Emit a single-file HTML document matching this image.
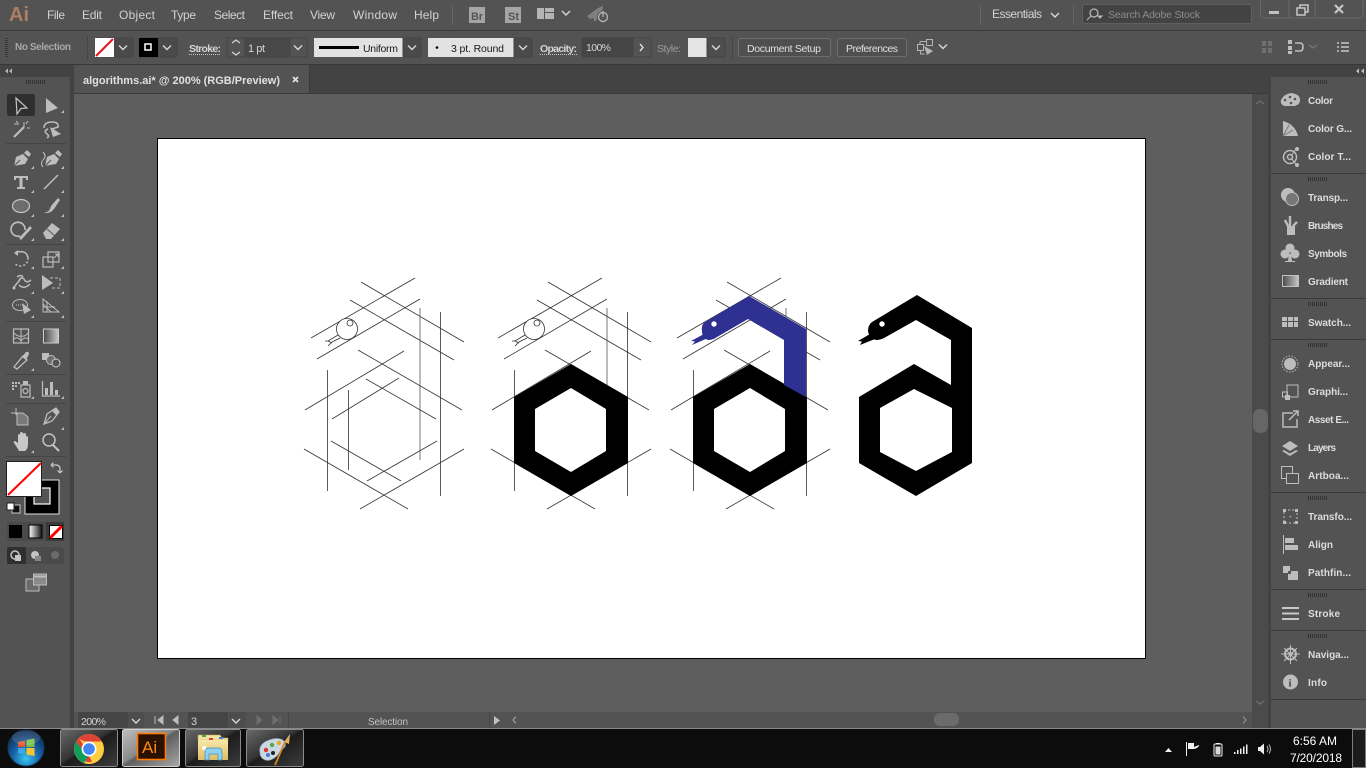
<!DOCTYPE html>
<html><head><meta charset="utf-8"><title>Illustrator</title>
<style>
html,body{margin:0;padding:0;background:#535353;width:1366px;height:768px;overflow:hidden}
svg{position:absolute;left:0;top:0;display:block}
text{font-family:"Liberation Sans",sans-serif;fill:#d4d4d4;font-size:11px}
.m text{font-size:12px;fill:#d2d2d2}
.p text{font-size:10px;font-weight:bold;fill:#dcdcdc}
.i{fill:#bdbdbd;stroke:none}
.o{fill:none;stroke:#bdbdbd;stroke-width:1.5}
.c{fill:none;stroke:#d8d8d8;stroke-width:1.4}
.g line{stroke:#333;stroke-width:.8}
</style></head><body>
<svg width="1366" height="768" viewBox="0 0 1366 768" xmlns="http://www.w3.org/2000/svg">
<defs>
<path id="ch" d="M-4,-2 L0,2 L4,-2" fill="none" stroke="#d8d8d8" stroke-width="1.4"/>
<path id="tr" d="M3,0 V3 H0 Z" fill="#bdbdbd"/>
<path id="grip" d="M.5,0 v4 M2.500,0 v4 M4.500,0 v4 M6.500,0 v4 M8.500,0 v4 M10.500,0 v4 M12.500,0 v4 M14.500,0 v4 M16.500,0 v4 M18.500,0 v4" stroke="#333" stroke-width="1" fill="none"/>
<linearGradient id="gr" x1="0" x2="1" y1="0" y2="0"><stop offset="0" stop-color="#4a4a4a"/><stop offset="1" stop-color="#c8c8c8"/></linearGradient>
<linearGradient id="gw" x1="0" x2="1" y1="0" y2="0"><stop offset="0" stop-color="#fff"/><stop offset="1" stop-color="#111"/></linearGradient>
<linearGradient id="tb" x1="0" x2="1" y1="0" y2="1"><stop offset="0" stop-color="#6a6a6a"/><stop offset=".45" stop-color="#333"/><stop offset=".5" stop-color="#1c1c1c"/><stop offset="1" stop-color="#3c3c3c"/></linearGradient>
<linearGradient id="tba" x1="0" x2="1" y1="0" y2="1"><stop offset="0" stop-color="#bdbdbd"/><stop offset=".45" stop-color="#8a8a8a"/><stop offset=".5" stop-color="#5f5f5f"/><stop offset="1" stop-color="#a8a8a8"/></linearGradient>
<radialGradient id="orb" cx=".5" cy=".8" r=".75"><stop offset="0" stop-color="#37c6f2"/><stop offset=".5" stop-color="#1a62a8"/><stop offset="1" stop-color="#0b2a52"/></radialGradient>
<linearGradient id="fold" x1="0" x2="0" y1="0" y2="1"><stop offset="0" stop-color="#f7e8a8"/><stop offset="1" stop-color="#e0bd62"/></linearGradient>
<g id="guides" class="g">
<line x1="311" y1="338" x2="415" y2="278"/><line x1="317" y1="359" x2="420" y2="299"/>
<line x1="361" y1="282" x2="464" y2="342"/><line x1="350" y1="300" x2="454" y2="360"/>
<line x1="420" y1="308" x2="420" y2="460" style="stroke:#555"/><line x1="440.5" y1="312" x2="440.5" y2="496"/>
<line x1="358" y1="350" x2="462" y2="410"/><line x1="404" y1="351" x2="305" y2="410"/>
<line x1="366" y1="379" x2="436" y2="419"/><line x1="399" y1="378" x2="332" y2="419"/>
<line x1="327.5" y1="370" x2="327.5" y2="491"/><line x1="348.5" y1="390" x2="348.5" y2="470"/>
<line x1="331" y1="441" x2="401" y2="481"/><line x1="437" y1="441" x2="367" y2="481"/>
<line x1="304" y1="449" x2="408" y2="509"/><line x1="464" y1="449" x2="360" y2="509"/>
</g>
<g id="head" fill="#fff" stroke="#333" stroke-width=".8">
<circle cx="347" cy="329" r="10.5"/><circle cx="350" cy="323" r="3"/>
<path d="M338,335 L328,341 L325,341 M340,338 L332,342 L328,346 M328,341 L332,343" fill="none"/>
</g>
<g id="hex">
<path d="M571,364 L628,397 V463 L571,496 L514,463 V397 Z" fill="#000"/>
<path d="M571,388 L606,409 V451 L571,472 L535,451 V409 Z" fill="#fff"/>
</g>
</defs>

<!-- base -->
<rect width="1366" height="768" fill="#535353"/>
<rect x="0" y="30" width="1366" height="1" fill="#3a3a3a"/>
<rect x="0" y="64" width="1366" height="1" fill="#383838"/>
<rect x="74" y="65" width="1194" height="29" fill="#434343"/>
<rect x="74" y="93" width="1194" height="1" fill="#3a3a3a"/>
<rect x="74" y="94" width="1178" height="618" fill="#5e5e5e"/>
<rect x="1252" y="94" width="16" height="618" fill="#4b4b4b"/>
<rect x="70" y="65" width="4" height="663" fill="#424242"/>
<rect x="1268" y="65" width="3" height="663" fill="#424242"/>
<rect x="0" y="65" width="72" height="12" fill="#434343"/>
<rect x="1271" y="65" width="95" height="12" fill="#434343"/>

<!-- menu -->
<text x="9" y="21" style="font-size:20px;font-weight:bold;fill:#ae7f60">Ai</text>
<g class="m">
<text x="47" y="19" textLength="18">File</text><text x="82" y="19" textLength="20">Edit</text>
<text x="119" y="19" textLength="36">Object</text><text x="171" y="19" textLength="25">Type</text>
<text x="214" y="19" textLength="31">Select</text><text x="263" y="19" textLength="30">Effect</text>
<text x="310" y="19" textLength="25">View</text><text x="353" y="19" textLength="44">Window</text>
<text x="414" y="19" textLength="25">Help</text>
</g>
<rect x="452" y="5" width="1" height="20" fill="#666"/>
<rect x="469" y="7" width="16" height="16" fill="#a5a5a5"/><text x="471" y="20" textLength="12" style="font-weight:bold;fill:#555">Br</text>
<rect x="505" y="7" width="16" height="16" fill="#a5a5a5"/><text x="508" y="20" textLength="11" style="font-weight:bold;fill:#555">St</text>
<path d="M537,8 h7 v11 h-7 Z M545,8 h9 v4 h-9 Z M545,13 h9 v6 h-9 Z" fill="#b5b5b5"/>
<use href="#ch" x="566" y="13"/>
<path d="M587,16 L594,11 Q599,7 603,6 Q603,10 600,14 L595,22 L593,18 L590,19 Z" fill="#7f7f7f"/>
<circle cx="603" cy="17" r="6" fill="#535353"/>
<circle cx="603" cy="17" r="4.5" fill="none" stroke="#b0b0b0" stroke-width="1.4"/><path d="M603,11 v6" stroke="#b0b0b0" stroke-width="1.4"/>
<rect x="980" y="5" width="1" height="20" fill="#666"/><rect x="1073" y="5" width="1" height="20" fill="#666"/>
<text x="992" y="18" textLength="50" style="font-size:12px;fill:#d2d2d2">Essentials</text>
<use href="#ch" x="1055" y="15"/>
<rect x="1082.500" y="4.500" width="169" height="19" rx="2" fill="#434343" stroke="#5f5f5f"/>
<circle cx="1094" cy="13" r="4" fill="none" stroke="#bbb" stroke-width="1.2"/><path d="M1091,16 L1087,20 M1098,16 h4 l-2,2 Z" stroke="#bbb" fill="#bbb"/>
<text x="1108" y="18" textLength="92" style="font-size:10.500px;fill:#8d8d8d">Search Adobe Stock</text>
<path d="M1260.500,0 V15 Q1260.500,18 1264,18 H1360 Q1363,18 1363,15 V0 M1289,0 V18 M1315,0 V18" fill="none" stroke="#686868"/>
<rect x="1269" y="11" width="10" height="3" fill="#c0c0c0"/>
<path d="M1297,8 h8 v7 h-8 Z M1300,8 V5 h8 v7 h-3" fill="none" stroke="#c8c8c8" stroke-width="1.5"/>
<path d="M1335,5 L1343,13 M1343,5 L1335,13" stroke="#c8c8c8" stroke-width="2.200"/>

<!-- control bar -->
<path d="M5,38.500 h3 M5,40.500 h3 M5,42.500 h3 M5,44.500 h3 M5,46.500 h3 M5,48.500 h3 M5,50.500 h3 M5,52.500 h3 M5,54.500 h3 M5,56.500 h3" stroke="#3a3a3a"/>
<text x="15" y="50" textLength="56" style="font-size:10px;font-weight:bold;fill:#a8a8a8">No Selection</text>
<rect x="87" y="36" width="1" height="24" fill="#444"/>
<rect x="95" y="38" width="38" height="19" rx="2" fill="#4a4a4a" stroke="#444"/>
<rect x="95" y="38" width="19" height="19" fill="#fff"/><path d="M96,56 L113,39" stroke="#e8141c" stroke-width="2"/>
<use href="#ch" x="123" y="47.500"/>
<rect x="139" y="38" width="38" height="19" rx="2" fill="#4a4a4a" stroke="#444"/>
<rect x="139" y="38" width="19" height="19" fill="#000"/><rect x="145" y="44" width="6" height="6" fill="none" stroke="#fff" stroke-width="1.500"/>
<use href="#ch" x="167" y="47.500"/>
<text x="189" y="52" textLength="32" style="font-size:10.500px;font-weight:bold">Stroke:</text>
<path d="M189,54.500 H221" stroke="#c8c8c8" stroke-dasharray="1 1"/>
<rect x="227" y="38" width="80" height="19" rx="2" fill="#484848" stroke="#444"/>
<rect x="227" y="38" width="18" height="19" fill="#535353" stroke="#444"/>
<path d="M232,43 l4,-3 4,3 M232,52 l4,3 4,-3" fill="none" stroke="#d8d8d8" stroke-width="1.2"/>
<text x="248" y="52" textLength="17">1 pt</text><rect x="290" y="38" width="17" height="19" fill="#535353" stroke="#444"/><use href="#ch" x="298" y="47.500"/>
<rect x="314" y="38" width="89" height="19" fill="#e2e2e2"/><rect x="319" y="46" width="40" height="3" fill="#000"/>
<text x="363" y="52" textLength="35" style="font-size:10.500px;fill:#1a1a1a">Uniform</text>
<rect x="403" y="38" width="18" height="19" fill="#4a4a4a" stroke="#444"/><use href="#ch" x="412" y="47.500"/>
<rect x="428" y="38" width="86" height="19" fill="#e2e2e2"/><circle cx="437" cy="47.500" r="1.300" fill="#000"/>
<text x="451" y="52" textLength="53" style="font-size:10.500px;fill:#1a1a1a">3 pt. Round</text>
<rect x="514" y="38" width="18" height="19" fill="#4a4a4a" stroke="#444"/><use href="#ch" x="523" y="47.500"/>
<text x="540" y="52" textLength="37" style="font-size:10.500px;font-weight:bold">Opacity:</text>
<path d="M540,54.500 H577" stroke="#c8c8c8" stroke-dasharray="1 1"/>
<rect x="582" y="38" width="69" height="19" rx="2" fill="#454545" stroke="#444"/><text x="586" y="51" textLength="25" style="font-size:10.500px">100%</text>
<rect x="633" y="38" width="18" height="19" fill="#535353" stroke="#444"/><path d="M640,44 l3,3.500 -3,3.500" fill="none" stroke="#ddd" stroke-width="1.400"/>
<text x="657" y="52" textLength="24" style="font-size:10.500px;fill:#9c9c9c">Style:</text>
<rect x="688" y="38" width="19" height="19" fill="#e4e4e4"/><rect x="707" y="38" width="18" height="19" fill="#4d4d4d" stroke="#444"/><use href="#ch" x="716" y="47.500"/>
<rect x="732" y="36" width="1" height="24" fill="#444"/>
<rect x="738.500" y="38.500" width="92" height="18" rx="2" fill="#4f4f4f" stroke="#6e6e6e"/><text x="747" y="52" textLength="74" style="font-size:10.500px;fill:#e0e0e0">Document Setup</text>
<rect x="837.500" y="38.500" width="69" height="18" rx="2" fill="#4f4f4f" stroke="#6e6e6e"/><text x="846" y="52" textLength="52" style="font-size:10.500px;fill:#e0e0e0">Preferences</text>
<rect x="926.500" y="39.500" width="6" height="6" fill="none" stroke="#b5b5b5"/><rect x="917.500" y="44.500" width="6" height="6" fill="none" stroke="#b5b5b5"/><path d="M920,41.500 h6 M920,44 v-2.500 M920.500,51 v3 h4" fill="none" stroke="#b5b5b5"/><path d="M924,46 L933,51 L927,55 Z" fill="#b5b5b5"/>
<use href="#ch" x="943" y="46.500"/>
<path d="M1262,41 h4 v5 h-4 Z M1268,41 h4 v5 h-4 Z M1262,48 h4 v5 h-4 Z M1268,48 h4 v5 h-4 Z" fill="#6f6f6f"/>
<path d="M1288,40 h4 v4 h-4 Z M1288,46 h4 v4 h-4 Z M1288,51 h4 v3 h-4 Z" fill="#bdbdbd"/><path d="M1295,43 h5 q3,0 3,4 t-3,4 h-5" fill="none" stroke="#bdbdbd" stroke-width="1.600"/>
<path d="M1309,45 l4,3 4,-3" fill="none" stroke="#777" stroke-width="1.200"/>
<path d="M1337,43 h2 M1341,43 h8 M1337,47 h2 M1341,47 h8 M1337,51 h2 M1341,51 h8" stroke="#c8c8c8" stroke-width="1.400"/>

<!-- tab -->
<rect x="74" y="65" width="235" height="28" fill="#535353"/><rect x="309" y="65" width="1" height="28" fill="#3a3a3a"/>
<text x="83" y="84" textLength="197" style="font-size:11px;font-weight:bold;fill:#e0e0e0">algorithms.ai* @ 200% (RGB/Preview)</text>
<path d="M293,77 l5,5 M298,77 l-5,5" stroke="#e0e0e0" stroke-width="1.800"/>

<!-- artboard -->
<rect x="157.500" y="138.500" width="988" height="520" fill="#fff" stroke="#000"/>
<use href="#guides"/><use href="#head"/>
<use href="#guides" x="187"/><use href="#head" x="187"/><use href="#hex"/>
<use href="#guides" x="366"/><use href="#hex" x="179"/>
<path d="M749,296 L806,329 V397 L784,385 V340 L748,319 L717,337 Q713,340 708,340 Q702,338 702,331 Q701,325 705,322 Z" fill="#2e3192"/>
<path d="M704,334 L691,341 L695,341.500 L692,345 L708,338 Z" fill="#2e3192"/>
<circle cx="714" cy="324" r="2.700" fill="#fff"/>
<path d="M917,295 L972,328 V463 L916,496 L859,463 V397 L914,364 L951,385 V340 L916,320 L884,338 Q880,340 876,340 Q869,338 868,331 Q868,325 872,322 Z" fill="#000"/>
<path d="M914,389 L952,408 V452 L916,471 L880,452 V408 Z" fill="#fff"/>
<path d="M870,334 L858,341 L862,341.500 L860,345 L875,339 Z" fill="#000"/>
<circle cx="882" cy="324" r="2.700" fill="#fff"/>

<!-- left toolbar -->
<path d="M12,68.500 l-3,2.500 3,2.500 M8,68.500 l-3,2.500 3,2.500" fill="#b5b5b5"/>
<use href="#grip" x="26" y="80"/>
<rect x="7" y="94" width="28" height="22" rx="2" fill="#2f2f2f"/>
<g>
<path d="M16,98 L27,108 L21,108.500 L17,114 Z" fill="none" stroke="#c4c4c4" stroke-width="1.200"/>
<path d="M46,98 L58,108 L46,113 Z" class="i"/><use href="#tr" x="61" y="110"/>
<!-- wand -->
<path d="M14,137 L24,127" stroke="#bdbdbd" stroke-width="2.200"/><path d="M24,122 v5 M28,121 l-2,3 M14,124 h5 M16,121 l2,2 M27,128 h3" stroke="#bdbdbd"/>
<!-- lasso -->
<path d="M44,128 Q44,122 52,122 Q59,122 58,127 L52,129 M48,129 Q43,131 47,134 Q50,136 47,138" class="o"/><path d="M50,127 L61,134 L53,137 Z" class="i"/>
<rect x="6" y="143" width="60" height="1" fill="#444"/>
<!-- pen -->
<path d="M14,166 L16,157 L23,154 L28,159 L25,164 Z" class="i"/><path d="M14,166 L20,160" stroke="#535353"/><path d="M24,153 L27,150 L31,154 L29,157 Z" class="i"/><use href="#tr" x="31" y="166"/>
<path d="M45,166 L47,157 L54,154 L59,159 L56,164 Z" class="i"/><path d="M45,166 L51,160" stroke="#535353"/><path d="M55,153 L58,150 L62,154 L60,157 Z" class="i"/><path d="M43,152 Q47,156 43,160 Q40,164 43,167" class="o" style="stroke-width:1"/><use href="#tr" x="61" y="166"/>
<!-- type -->
<path d="M14,176 H28 V180 H26 V178 H22.500 V187 H25 V189 H17 V187 H19.500 V178 H16 V180 H14 Z" class="i"/><use href="#tr" x="31" y="190"/>
<path d="M44,189 L58,175" stroke="#bdbdbd" stroke-width="1.500"/><use href="#tr" x="61" y="190"/>
<!-- ellipse -->
<ellipse cx="21" cy="206" rx="8.500" ry="6.500" fill="#6d6d6d" stroke="#c4c4c4" stroke-width="1.200"/><use href="#tr" x="31" y="214"/>
<path d="M44,213 Q50,212 51,206 L58,198 L60,200 L54,209 Q50,214 44,213 Z" class="i"/><use href="#tr" x="61" y="214"/>
<!-- shaper -->
<path d="M25,230 A7,7 0 1 0 20,236" class="o" style="stroke-width:1.700"/><path d="M19,238 L30,226 L32,228 L21,240 Z" class="i"/><use href="#tr" x="31" y="238"/>
<path d="M43,233 L52,223 L60,229 L51,239 L46,239 Z" class="i"/><path d="M47,229 L55,236" stroke="#535353"/><use href="#tr" x="61" y="238"/>
<rect x="6" y="244" width="60" height="1" fill="#444"/>
<!-- rotate -->
<path d="M17,252 Q27,250 28,258 Q28,265 21,266 Q14,266 14,259" fill="none" stroke="#bdbdbd" stroke-width="1.500" stroke-dasharray="16 2 2 2 2 2 2 2 2"/><path d="M14,253 l4,-3 v6 Z" class="i"/><use href="#tr" x="31" y="266"/>
<!-- scale -->
<rect x="43" y="257" width="10" height="10" class="o" style="stroke-width:1.200"/><rect x="48" y="252" width="11" height="10" class="o" style="stroke-width:1.200"/><path d="M54,258 l4,-4 M55,254 h3 v3" stroke="#bdbdbd" fill="none"/><use href="#tr" x="61" y="266"/>
<!-- warp -->
<path d="M14,287 L19,281 Q21,276 24,279 Q26,284 31,280 M17,277 Q21,274 23,277 M19,285 Q24,290 30,284" class="o"/><circle cx="14" cy="288" r="1.500" class="i"/><use href="#tr" x="31" y="291"/>
<!-- free transform -->
<path d="M42,275 L53,283 L42,290 Z" class="i"/><path d="M50,278 H60 V288 H50" fill="none" stroke="#bdbdbd" stroke-dasharray="3 2"/><use href="#tr" x="61" y="291"/>
<!-- shape builder -->
<ellipse cx="20" cy="305" rx="7.500" ry="5.500" fill="none" stroke="#bdbdbd"/><path d="M16,305 h8" stroke="#bdbdbd" stroke-dasharray="1 1"/><path d="M22,303 L31,310 L24,314 Z" class="i"/><use href="#tr" x="31" y="315"/>
<!-- perspective -->
<path d="M43,299 L59,312 H43 Z M43,304 L51,312 M47,301 V312 M43,307 H55" fill="none" stroke="#bdbdbd"/><use href="#tr" x="61" y="315"/>
<rect x="6" y="321" width="60" height="1" fill="#444"/>
<!-- mesh -->
<rect x="13.500" y="329" width="15" height="14" fill="none" stroke="#bdbdbd" stroke-width="1.200"/><path d="M21,329 V343 M14,333 Q18,337 21,336 Q25,337 28,333 M14,339 Q18,336 21,341 Q25,336 28,339" fill="none" stroke="#bdbdbd"/>
<!-- gradient -->
<rect x="43.500" y="329" width="15" height="14" fill="url(#gr)" stroke="#ccc"/>
<!-- eyedropper -->
<path d="M14,367 L23,356 L27,360 L17,369 Z" fill="none" stroke="#bdbdbd" stroke-width="1.300"/><path d="M22,357 L26,352 Q29,351 29,354 L26,360 Z" class="i"/><use href="#tr" x="31" y="368"/>
<!-- blend -->
<rect x="42" y="353" width="7" height="7" class="i"/><circle cx="51" cy="360" r="4.500" fill="#6d6d6d" stroke="#bdbdbd"/><circle cx="56" cy="363" r="4" fill="#535353" stroke="#d0d0d0"/>
<rect x="6" y="374" width="60" height="1" fill="#444"/>
<!-- spray -->
<path d="M12,382 h2 v2 h-2 Z M15,382 h2 v2 h-2 Z M18,382 h2 v2 h-2 Z M12,385 h2 v2 h-2 Z M15,385 h2 v2 h-2 Z M12,388 h2 v2 h-2 Z" class="i"/>
<rect x="21" y="385" width="9" height="12" class="o" style="stroke-width:1.200"/><rect x="23" y="381" width="5" height="4" class="i"/><circle cx="25.500" cy="391" r="2.500" class="o" style="stroke-width:1.200"/><use href="#tr" x="31" y="396"/>
<!-- graph -->
<path d="M42.500,381 V396 H60" fill="none" stroke="#bdbdbd" stroke-width="1.200"/><path d="M45,388 h3 v7 h-3 Z M50,382 h3 v13 h-3 Z M55,390 h3 v5 h-3 Z" class="i"/><use href="#tr" x="61" y="396"/>
<rect x="6" y="403" width="60" height="1" fill="#444"/>
<!-- artboard tool -->
<path d="M11,413 h7 M16,408 v7" stroke="#bdbdbd"/><path d="M17,413 h6 l5,4 v8 H17 Z" fill="#7a7a7a" stroke="#bdbdbd"/>
<!-- slice -->
<path d="M44,424 L47,414 L56,408 L59,412 L52,421 Z" fill="none" stroke="#bdbdbd" stroke-width="1.300"/><path d="M52,411 L56,408 L59,412 L56,415 Z" class="i"/><path d="M44,424 L51,416" stroke="#bdbdbd"/><use href="#tr" x="61" y="427"/>
<!-- hand -->
<path d="M18,449 L14,443 Q13,441 15,441 L18,443 V435 Q19,433 20,435 V440 V433 Q21,431 23,433 V440 V434 Q24,432 26,434 V441 V437 Q27,435 28,437 V444 Q28,449 25,451 H19 Z" fill="#c8c8c8"/><use href="#tr" x="31" y="450"/>
<!-- zoom -->
<circle cx="49" cy="440" r="6" fill="none" stroke="#c4c4c4" stroke-width="1.500"/><path d="M53,445 L59,451" stroke="#c4c4c4" stroke-width="2"/>
<rect x="6" y="456" width="60" height="1" fill="#444"/>
</g>
<!-- fill/stroke -->
<rect x="25" y="480" width="34" height="34" fill="#000" stroke="#e0e0e0"/>
<rect x="34" y="488" width="16" height="16" fill="#535353" stroke="#fff" stroke-width="1.200"/>
<rect x="6.500" y="461.500" width="35" height="35" fill="#fff" stroke="#222"/>
<path d="M8,495 L41,463" stroke="#f00" stroke-width="2"/>
<path d="M51,465 h5 q4,0 4,4 v4 M51,465 l2.500,-2.500 M51,465 l2.500,2.500 M60,473 l-2.500,-2.500 M60,473 l2.500,-2.500" fill="none" stroke="#c8c8c8" stroke-width="1.200"/>
<rect x="12" y="505" width="8" height="8" fill="#111" stroke="#ccc"/><rect x="7" y="503" width="7" height="7" fill="#fff" stroke="#222"/>
<rect x="7" y="522" width="57" height="19" rx="2" fill="#4a4a4a"/>
<rect x="46" y="522" width="18" height="19" fill="#3a3a3a"/>
<rect x="9" y="525" width="13" height="13" fill="#000"/>
<rect x="29" y="525" width="13" height="13" fill="url(#gw)" stroke="#000"/>
<rect x="49.500" y="525.500" width="13" height="13" fill="#fff" stroke="#000"/><path d="M50,538 L62,526" stroke="#f00" stroke-width="3"/>
<rect x="7" y="547" width="57" height="17" rx="2" fill="#4a4a4a"/><rect x="7" y="547" width="19" height="17" rx="2" fill="#2f2f2f"/>
<circle cx="15" cy="555" r="4" fill="none" stroke="#c4c4c4" stroke-width="1.500"/><rect x="15" y="555" width="6" height="6" fill="#c4c4c4"/>
<circle cx="35" cy="555" r="4" fill="#c4c4c4"/><rect x="35" y="556" width="6" height="5" fill="#888"/>
<circle cx="55" cy="555" r="4" fill="#6b6b6b"/>
<rect x="26" y="579" width="13" height="12" fill="#6a6a6a" stroke="#bdbdbd"/><rect x="33.500" y="574" width="13" height="11" fill="#8a8a8a" stroke="#bdbdbd"/>
<path d="M33.500,576.500 h13" stroke="#bdbdbd" stroke-width="2"/>

<!-- v scrollbar -->
<path d="M1256,104 l4,-3 4,3 M1256,701 l4,3 4,-3" fill="none" stroke="#6f6f6f" stroke-width="1.400"/>
<rect x="1253" y="409" width="15" height="24" rx="7" fill="#666"/>

<!-- right panel -->
<path d="M1359,68.500 l-3,2.500 3,2.500 Z M1364,68.500 l-3,2.500 3,2.500 Z" fill="#c0c0c0"/>
<g fill="#3a3a3a">
<rect x="1271" y="173" width="95" height="1"/><rect x="1271" y="298" width="95" height="1"/><rect x="1271" y="339" width="95" height="1"/>
<rect x="1271" y="492" width="95" height="1"/><rect x="1271" y="589" width="95" height="1"/><rect x="1271" y="630" width="95" height="1"/><rect x="1271" y="699" width="95" height="1"/>
</g>
<use href="#grip" x="1308" y="80"/><use href="#grip" x="1308" y="177"/><use href="#grip" x="1308" y="302"/><use href="#grip" x="1308" y="343"/><use href="#grip" x="1308" y="496"/><use href="#grip" x="1308" y="593"/><use href="#grip" x="1308" y="634"/>
<g class="p">
<text x="1308" y="104" textLength="25">Color</text><text x="1308" y="132" textLength="44">Color G...</text><text x="1308" y="160" textLength="43">Color T...</text>
<text x="1308" y="201" textLength="40">Transp...</text><text x="1308" y="229" textLength="35">Brushes</text><text x="1308" y="257" textLength="39">Symbols</text><text x="1308" y="285" textLength="40">Gradient</text>
<text x="1308" y="326" textLength="43">Swatch...</text>
<text x="1308" y="367" textLength="42">Appear...</text><text x="1308" y="395" textLength="40">Graphi...</text><text x="1308" y="423" textLength="41">Asset E...</text><text x="1308" y="451" textLength="28">Layers</text><text x="1308" y="479" textLength="41">Artboa...</text>
<text x="1308" y="520" textLength="44">Transfo...</text><text x="1308" y="548" textLength="25">Align</text><text x="1308" y="576" textLength="43">Pathfin...</text>
<text x="1308" y="617" textLength="32">Stroke</text>
<text x="1308" y="658" textLength="41">Naviga...</text><text x="1308" y="686" textLength="19">Info</text>
</g>
<!-- panel icons -->
<path d="M1281,100 Q1284,94 1291,93 Q1300,94 1300,100 Q1300,105 1294,106 H1285 Q1280,105 1281,100 Z" class="i"/><circle cx="1285" cy="100" r="1.300" fill="#535353"/><circle cx="1290" cy="97" r="1.300" fill="#535353"/><circle cx="1295" cy="99" r="1.300" fill="#535353"/><circle cx="1291" cy="103" r="1.300" fill="#535353"/>
<path d="M1283,121 Q1295,124 1298,136 H1283 Z" class="i"/><path d="M1283,136 L1289,125 M1283,136 L1293,130" stroke="#777"/>
<circle cx="1290" cy="157" r="6.500" class="o"/><circle cx="1290" cy="157" r="2.500" class="o"/><path d="M1291,156 L1296,149 M1291,158 L1296,164" stroke="#bdbdbd"/><circle cx="1297" cy="149" r="2" class="i"/><circle cx="1297" cy="165" r="2" class="i"/>
<circle cx="1288" cy="195" r="7" class="i"/><circle cx="1292" cy="199" r="6.500" fill="#777" stroke="#bdbdbd"/>
<path d="M1287,226 h8 v9 h-8 Z" class="i"/><path d="M1288,226 L1285,220 M1290,226 V216 M1293,226 L1297,222" stroke="#bdbdbd" stroke-width="2.400"/>
<circle cx="1290" cy="248" r="4.500" class="i"/><circle cx="1285" cy="254" r="4.500" class="i"/><circle cx="1295" cy="254" r="4.500" class="i"/><path d="M1289,254 h2 l1,7 h3 v1 h-10 v-1 h3 Z" class="i"/>
<rect x="1282.500" y="275.500" width="16" height="11" fill="url(#gr)" stroke="#c0c0c0"/>
<path d="M1282,317 h5 v4 h-5 Z M1288,317 h5 v4 h-5 Z M1294,317 h4 v4 h-4 Z M1282,322 h5 v5 h-5 Z M1288,322 h5 v5 h-5 Z M1294,322 h4 v5 h-4 Z" fill="#bdbdbd"/>
<circle cx="1290" cy="364" r="6" class="i"/><circle cx="1290" cy="364" r="8" fill="none" stroke="#bdbdbd" stroke-dasharray="1.500 1.500"/>
<rect x="1287" y="385" width="11" height="12" fill="none" stroke="#bdbdbd"/><rect x="1282.500" y="392" width="5" height="5" fill="none" stroke="#bdbdbd"/><rect x="1285" y="395" width="5" height="5" fill="#bdbdbd"/>
<path d="M1293,413 h-10 v14 h14 v-8" class="o"/><path d="M1289,420 l9,-9 M1293,411 h5 v5" fill="none" stroke="#bdbdbd" stroke-width="1.500"/>
<path d="M1290,441 L1298,446 L1290,451 L1282,446 Z" class="i"/><path d="M1284,450 L1290,453.500 L1296,450 L1298,451 L1290,456 L1282,451 Z" class="i"/>
<rect x="1281.500" y="466.500" width="11" height="12" fill="none" stroke="#bdbdbd"/><rect x="1286.500" y="473.500" width="12" height="10" fill="#535353" stroke="#bdbdbd"/>
<rect x="1284" y="510" width="13" height="13" fill="none" stroke="#bdbdbd" stroke-dasharray="2 2"/><path d="M1283,509 h3 v3 h-3 Z M1295,509 h3 v3 h-3 Z M1283,521 h3 v3 h-3 Z M1295,521 h3 v3 h-3 Z" class="i"/><circle cx="1290.500" cy="516.500" r=".8" class="i"/>
<path d="M1283.500,535 V554" stroke="#bdbdbd"/><rect x="1285" y="538" width="9" height="5" class="i"/><rect x="1285" y="545" width="13" height="5" class="i"/>
<rect x="1283" y="566" width="7" height="7" class="i"/><rect x="1288" y="571" width="10" height="9" class="i"/><rect x="1288" y="571" width="3" height="3" fill="#535353"/>
<path d="M1282,608 h17 M1282,613.500 h17 M1282,619 h17" stroke="#c8c8c8" stroke-width="2"/>
<circle cx="1290.500" cy="654" r="5.500" fill="none" stroke="#bdbdbd" stroke-width="2"/><circle cx="1290.500" cy="654" r="2" class="i"/><path d="M1281,654 h19 M1290.500,645 v19 M1284,648 l13,13 M1297,648 l-13,13" stroke="#bdbdbd"/>
<circle cx="1290.500" cy="682" r="7.500" class="i"/><text x="1288.500" y="686.500" style="font-family:'Liberation Serif',serif;font-size:11px;font-weight:bold;fill:#444">i</text>

<!-- status bar -->
<rect x="74" y="712" width="1194" height="16" fill="#535353"/>
<rect x="78" y="712" width="50" height="16" fill="#454545"/><text x="81" y="725" textLength="25" style="font-size:10.500px">200%</text>
<rect x="128" y="712" width="16" height="16" fill="#4d4d4d"/><use href="#ch" x="136" y="721"/>
<path d="M155,716 v8 M163,716 l-5,4 5,4 Z M178,716 l-5,4 5,4 Z" stroke="#bdbdbd" fill="#bdbdbd"/>
<rect x="188" y="712" width="40" height="16" fill="#454545"/><text x="191" y="725">3</text>
<rect x="229" y="712" width="17" height="16" fill="#4d4d4d"/><use href="#ch" x="236" y="721"/>
<path d="M257,716 l5,4 -5,4 Z M273,716 l5,4 -5,4 Z M280,716 v8" stroke="#6e6e6e" fill="#6e6e6e"/>
<rect x="288" y="712" width="1" height="16" fill="#484848"/><rect x="489" y="712" width="1" height="16" fill="#484848"/>
<text x="368" y="725" textLength="40" style="font-size:10px;fill:#c0c0c0">Selection</text>
<path d="M494,716 l6,4.500 -6,4.500 Z" fill="#c0c0c0"/>
<path d="M516,716.500 l-3,3.500 3,3.500" fill="none" stroke="#9a9a9a" stroke-width="1.300"/>
<rect x="934" y="713" width="25" height="13" rx="6" fill="#6b6b6b"/>
<path d="M1243,716.500 l3,3.500 -3,3.500" fill="none" stroke="#8a8a8a" stroke-width="1.300"/>
<rect x="1252" y="712" width="16" height="16" fill="#4b4b4b"/>

<!-- taskbar -->
<rect x="0" y="728" width="1366" height="40" fill="#0c0c0c"/>
<rect x="0" y="728" width="1366" height="1" fill="#8a8a8a"/>
<circle cx="26" cy="748" r="18" fill="url(#orb)" stroke="#163a5c"/>
<path d="M18,742 l7,-1.500 v6.500 h-7 Z" fill="#e8552a"/><path d="M26.500,740 l8,-1.500 v8.500 h-8 Z" fill="#7cc242"/><path d="M18,748 h7 v6.500 l-7,-1.500 Z" fill="#3ea8e6"/><path d="M26.500,748 h8 v8 l-8,-1.500 Z" fill="#f7c32e"/>
<ellipse cx="26" cy="738" rx="14" ry="7" fill="#fff" opacity=".14"/>
<rect x="60.500" y="729.500" width="57" height="37" rx="2" fill="url(#tb)" stroke="#8a8a8a"/>
<rect x="122.500" y="729.500" width="57" height="37" rx="2" fill="url(#tba)" stroke="#d0d0d0"/>
<rect x="185.500" y="729.500" width="55" height="37" rx="2" fill="url(#tb)" stroke="#8a8a8a"/>
<rect x="246.500" y="729.500" width="57" height="37" rx="2" fill="url(#tb)" stroke="#8a8a8a"/>
<!-- chrome -->
<circle cx="89" cy="749" r="15" fill="#ffcd40"/>
<path d="M89,734 A15,15 0 0 1 102,741.500 L89,741.500 Q82,742 79,738 A15,15 0 0 1 89,734 Z M76,741.500 A15,15 0 0 1 79,738 L86,749 L92,762 A15,15 0 0 1 76,741.500 Z" fill="#db4437"/>
<path d="M76,741.500 A15,15 0 0 0 84,763 L91,752 L84,752 Z" fill="#0f9d58"/>
<circle cx="89" cy="749" r="7.500" fill="#fff"/><circle cx="89" cy="749" r="5.800" fill="#4285f4"/>
<!-- Ai -->
<rect x="137.500" y="733.500" width="28" height="26" fill="#2a1100" stroke="#ff7c00" stroke-width="1.600"/>
<text x="142" y="753" style="font-size:17px;fill:#ff8a14">Ai</text>
<!-- folder -->
<path d="M198,735 h22 l2,3 h6 v2 h-30 Z" fill="#f3e3a0" stroke="#c8a850" stroke-width=".6"/>
<rect x="202" y="735" width="4" height="2" fill="#3fae49"/><rect x="209" y="738" width="4" height="2" fill="#d8402f"/><rect x="219" y="737" width="4" height="2" fill="#3b82d8"/>
<rect x="198" y="740" width="30" height="20" fill="url(#fold)"/>
<path d="M205,760 v-8 q0,-4 4,-4 h9 q4,0 4,4 v8 h-4 v-6 h-9 v6 Z" fill="#8fd2ef" stroke="#3d94c8" stroke-width=".8"/>
<circle cx="204" cy="748" r="2" fill="#fff"/>
<!-- paint -->
<path d="M260,753 Q258,744 269,740 Q280,736 285,742 Q287,747 281,750 L277,756 Q270,762 265,760 Q260,758 260,753 Z" fill="#c9d8e2" stroke="#8299a8" stroke-width=".6"/>
<circle cx="266" cy="750" r="2.200" fill="#d33"/><circle cx="272" cy="745" r="2.200" fill="#5aa845"/><circle cx="279" cy="743" r="2.200" fill="#eda81f"/><circle cx="268" cy="755" r="2" fill="#3b7dd8"/>
<circle cx="273" cy="753" r="2" fill="#222"/>
<path d="M275,765 L285,742" stroke="#d9842a" stroke-width="1.800"/><path d="M284,742 L290,734 L289,744 Z" fill="#e0b060"/>
<!-- tray -->
<path d="M1165,752 l3.500,-4 3.500,4 Z" fill="#f0f0f0"/>
<path d="M1186.500,742 V756" stroke="#f0f0f0"/><path d="M1188,743 h6 v4 l5,-2 v1 l-2,2 -3,1 h-6 Z" fill="#f0f0f0"/>
<rect x="1214" y="744" width="8" height="12" rx="1" fill="none" stroke="#f0f0f0"/><rect x="1216" y="743" width="4" height="1" fill="#f0f0f0"/><rect x="1215.500" y="746.500" width="5" height="8" fill="#d8d8d8"/>
<path d="M1234,752 h1.500 v2 h-1.500 Z M1237,750 h1.500 v4 h-1.500 Z M1240,748.500 h1.500 v5.500 h-1.500 Z M1243,746.500 h1.500 v7.500 h-1.500 Z M1246,744.500 h1.500 v9.500 h-1.500 Z" fill="#f0f0f0"/>
<path d="M1258,747 h2 l4,-3.500 v11 l-4,-3.500 h-2 Z" fill="#eee"/><path d="M1267,746 q2,3 0,6 M1269,744.500 q3,4.500 0,9" fill="none" stroke="#bbb"/>
<text x="1293" y="745" textLength="44" style="font-size:12px;fill:#fff">6:56 AM</text>
<text x="1290" y="762" textLength="52" style="font-size:12px;fill:#fff">7/20/2018</text>
<rect x="1352.500" y="729.500" width="13" height="38" fill="#1c1c1c" stroke="#7d7d7d"/>
</svg>
</body></html>
